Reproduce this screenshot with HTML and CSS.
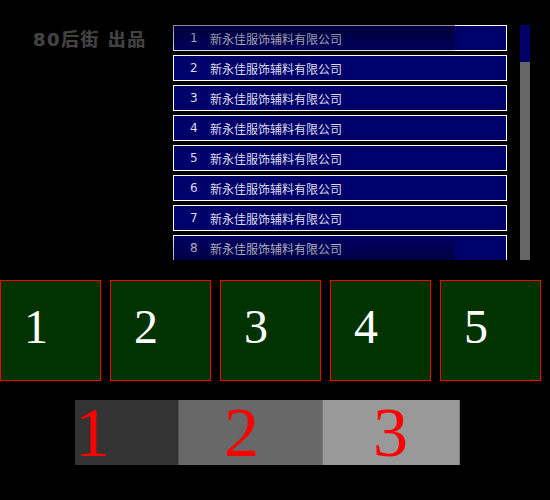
FILE: index.html
```html
<!DOCTYPE html>
<html lang="zh-CN">
<head>
<meta charset="utf-8">
<title>80后街 出品</title>
<link rel="stylesheet" href="styles.css">
</head>
<body>
  <div class="top">
    <div class="brand">80后街 出品</div>
    <div class="list-wrap">
      <ul class="list">
        <li class="item"><span class="num">1</span><span class="name">新永佳服饰辅料有限公司</span></li>
        <li class="item"><span class="num">2</span><span class="name">新永佳服饰辅料有限公司</span></li>
        <li class="item"><span class="num">3</span><span class="name">新永佳服饰辅料有限公司</span></li>
        <li class="item"><span class="num">4</span><span class="name">新永佳服饰辅料有限公司</span></li>
        <li class="item"><span class="num">5</span><span class="name">新永佳服饰辅料有限公司</span></li>
        <li class="item"><span class="num">6</span><span class="name">新永佳服饰辅料有限公司</span></li>
        <li class="item"><span class="num">7</span><span class="name">新永佳服饰辅料有限公司</span></li>
        <li class="item"><span class="num">8</span><span class="name">新永佳服饰辅料有限公司</span></li>
      </ul>
      <div class="fade fade-top"></div>
      <div class="fade fade-bottom"></div>
    </div>
    <div class="scrollbar"><div class="thumb"></div></div>
  </div>

  <div class="tiles">
    <div class="tile">1</div>
    <div class="tile">2</div>
    <div class="tile">3</div>
    <div class="tile">4</div>
    <div class="tile">5</div>
  </div>

  <div class="steps">
    <div class="step step-1">1</div>
    <div class="step step-2">2</div>
    <div class="step step-3">3</div>
  </div>
</body>
</html>
```

FILE: styles.css
```css
html, body {
  margin: 0;
  padding: 0;
  background: #000;
}

body {
  width: 550px;
  height: 500px;
  overflow: hidden;
}

/* header row: brand, scrolling list, scrollbar */
.top {
  display: flex;
  align-items: flex-start;
  padding-top: 25px;
  height: 235px;
}

.brand {
  width: 140px;
  padding-left: 33px;
  padding-top: 5px;
  font-family: "DejaVu Sans", "Noto Sans CJK SC", sans-serif;
  font-weight: bold;
  font-size: 18px;
  letter-spacing: 1.5px;
  line-height: 20px;
  color: #424242;
  text-shadow: 0 0 1px #2a2a2a;
  white-space: pre;
}

.list-wrap {
  position: relative;
  width: 334px;
  height: 235px;
  overflow: hidden;
}

.list {
  list-style: none;
  margin: 0;
  padding: 0;
  display: flex;
  flex-direction: column;
  gap: 4px;
}

.item {
  box-sizing: border-box;
  height: 26px;
  border: 1px solid #fff;
  background: #00006b;
  display: flex;
  align-items: center;
  padding-left: 16px;
  font-family: "DejaVu Sans", "Noto Sans CJK SC", sans-serif;
  font-size: 12px;
  color: #dcdcea;
  flex-shrink: 0;
}

.num {
  width: 20px;
}

/* soft shading at the top and bottom edges of the list */
.fade {
  position: absolute;
  left: 0;
  width: 282px;
  height: 26px;
  pointer-events: none;
}

.fade-top {
  top: 0;
  background: linear-gradient(to bottom, rgba(0, 0, 0, 0.45), rgba(0, 0, 0, 0.15));
}

.fade-bottom {
  bottom: 0;
  height: 22px;
  background: linear-gradient(to top, rgba(0, 0, 0, 0.35), rgba(0, 0, 0, 0.1));
}

.scrollbar {
  margin-left: 13px;
  width: 10px;
  height: 235px;
  background: #666;
}

.thumb {
  height: 37px;
  background: #000066;
}

/* row of numbered green tiles */
.tiles {
  display: flex;
  gap: 9px;
  margin-top: 20px;
}

.tile {
  box-sizing: border-box;
  width: 101px;
  height: 101px;
  border: 1px solid #ff0000;
  background: #003300;
  color: #fff;
  font-family: "Liberation Serif", "Times New Roman", serif;
  font-size: 48px;
  line-height: 48px;
  padding: 22px 0 0 23px;
}

/* grey step bar */
.steps {
  display: flex;
  margin: 19px 0 0 75px;
  width: 385px;
  height: 65px;
}

.step {
  box-sizing: border-box;
  height: 65px;
  color: #ff0000;
  font-family: "Liberation Serif", "Times New Roman", serif;
  font-size: 70px;
  line-height: 65px;
}

.step-1 {
  width: 103px;
  background: #333;
  padding-left: 0;
}

.step-2 {
  width: 144px;
  background: #686868;
  border-left: 1px solid #555;
  padding-left: 45px;
}

.step-3 {
  width: 138px;
  background: #999;
  border-left: 1px solid #777;
  border-right: 1px solid #777;
  padding-left: 50px;
}
```
